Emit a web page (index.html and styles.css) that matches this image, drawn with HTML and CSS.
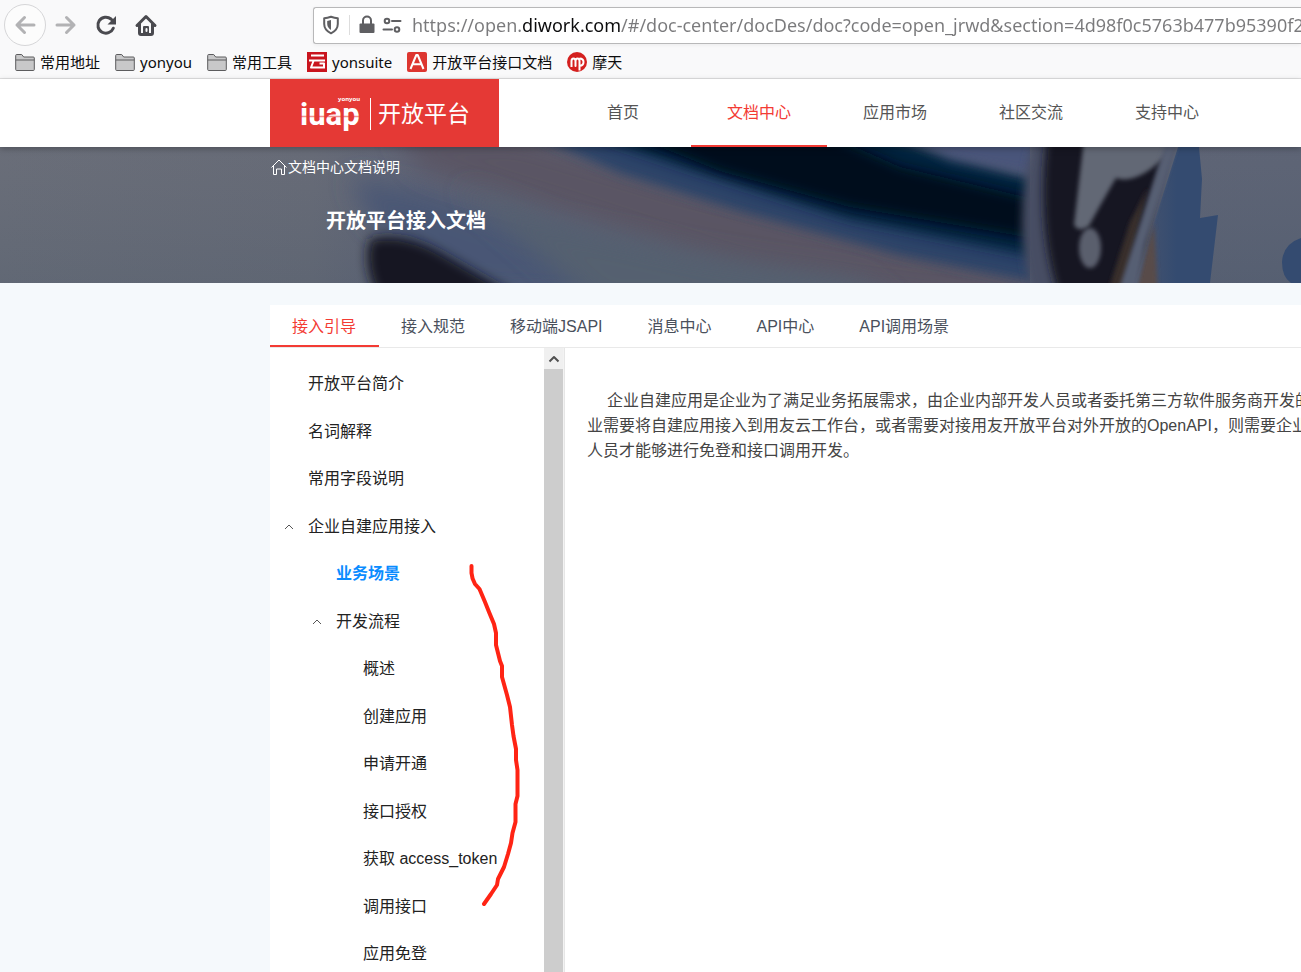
FILE: index.html
```html
<!DOCTYPE html>
<html lang="zh-CN">
<head>
<meta charset="utf-8">
<meta name="viewport" content="width=device-width, initial-scale=1">
<title>开放平台接入文档</title>
<link rel="stylesheet" href="styles.css">
</head>
<body>
<div class="browser">
  <div class="toolbar">
    <div class="tools">
      <button class="tool back" aria-label="后退"><svg width="24" height="24" viewBox="0 0 24 24"><path d="M21 12H4M11.500 4.500L4 12l7.500 7.500"/></svg></button>
      <button class="tool forward" aria-label="前进"><svg width="24" height="24" viewBox="0 0 24 24"><path d="M3 12h17M12.500 4.500L20 12l-7.500 7.500"/></svg></button>
      <button class="tool" aria-label="刷新"><svg width="24" height="24" viewBox="0 0 24 24"><path d="M19.300 15.200A8 8 0 1 1 17 6l2 2"/><path class="solid" d="M22 3v8.500H13.500z"/></svg></button>
      <button class="tool" aria-label="主页"><svg width="24" height="24" viewBox="0 0 24 24"><path d="M3 12.500L12 3.500l9 9M5.500 11v9q0 1.500 1.500 1.500h10q1.500 0 1.500-1.500v-9"/><path class="solid" d="M9 21v-7q0-1 1-1h4q1 0 1 1v7z"/><path class="door" d="M12.500 16v2"/></svg></button>
    </div>
    <div class="address">
      <svg class="shield" width="18" height="20" viewBox="0 0 18 20"><path d="M9 1.700Q5.500 3 2.200 3.200V9q0 6 6.800 9.300Q15.800 15 15.800 9V3.200Q12.500 3 9 1.700z"/><path class="solid" d="M9 5v10Q5.300 12.700 5.200 9V6z"/></svg>
      <svg class="secure" width="44" height="20" viewBox="0 0 44 20"><path class="solid" d="M1.500 8.500h13q1 0 1 1v7.500q0 1-1 1h-13q-1 0-1-1V9.500q0-1 1-1z"/><path d="M4 9V5.500a4 4 0 0 1 8 0V9M33 6h8.500M24.500 14.500H33"/><circle cx="28" cy="6" r="2.300"/><circle cx="38" cy="14.500" r="2.300"/></svg>
      <input class="url" type="text" aria-label="网址" value="https://open.diwork.com/#/doc-center/docDes/doc?code=open_jrwd&amp;section=4d98f0c5763b477b95390f25">
    </div>
  </div>
  <nav class="bookmarks" aria-label="书签">
    <a href="#"><svg width="20" height="20" viewBox="0 0 20 20"><path class="folder" d="M.7 3.500q0-1 1-1h5l2 2.500h9.600q1 0 1 1v11.500q0 1-1 1H1.700q-1 0-1-1zM.7 8h18.600"/></svg>常用地址</a>
    <a href="#"><svg width="20" height="20" viewBox="0 0 20 20"><path class="folder" d="M.7 3.500q0-1 1-1h5l2 2.500h9.600q1 0 1 1v11.500q0 1-1 1H1.700q-1 0-1-1zM.7 8h18.600"/></svg>yonyou</a>
    <a href="#"><svg width="20" height="20" viewBox="0 0 20 20"><path class="folder" d="M.7 3.500q0-1 1-1h5l2 2.500h9.600q1 0 1 1v11.500q0 1-1 1H1.700q-1 0-1-1zM.7 8h18.600"/></svg>常用工具</a>
    <a href="#"><svg width="20" height="20" viewBox="0 0 20 20"><path fill="#c9151e" d="M0 0h20v20H0z"/><path fill="none" stroke="#fff" stroke-width="2" d="M4 3.500h13M2 8.500h16M6.500 9L4 15.500h12.500M12.500 11.500h4.500v5"/></svg>yonsuite</a>
    <a href="#"><svg width="20" height="20" viewBox="0 0 20 20"><rect width="20" height="20" rx="2" fill="#dd3630"/><path fill="none" stroke="#fff" stroke-width="2" d="M3.500 17L9.300 3h1.400l5.800 14M6 12.200h8"/></svg>开放平台接口文档</a>
    <a href="#"><svg width="20" height="20" viewBox="0 0 20 20"><circle cx="10" cy="10" r="10" fill="#d4201f"/><path fill="none" stroke="#fff" stroke-width="2" d="M4.500 15V9q0-2.500 2-2.500t2 2.500v5V9q0-2.500 2-2.500t2 2.500v9.500M12.500 14q4-.5 4-4T12.500 6.500"/></svg>摩天</a>
  </nav>
</div>

<header class="site-header">
  <a class="brand" href="#" aria-label="iuap 开放平台">
    <svg width="62" height="42" viewBox="0 0 62 42"><text class="yonyou" x="38" y="8">yonyou</text><text class="iuap" x="0" y="32">iuap</text><path stroke="#e53935" stroke-opacity=".55" stroke-width="1.500" d="M0 23.500h61"/></svg>
    <span class="brand-name">开放平台</span>
  </a>
  <nav class="main-nav">
    <a href="#">首页</a>
    <a class="active" href="#">文档中心</a>
    <a href="#">应用市场</a>
    <a href="#">社区交流</a>
    <a href="#">支持中心</a>
  </nav>
</header>

<section class="banner">
  <svg class="photo" viewBox="0 0 1301 136" preserveAspectRatio="xMinYMin slice" aria-hidden="true">
    <defs>
      <linearGradient id="base" x1="0" x2="1"><stop offset="0" stop-color="#686c77"/><stop offset=".24" stop-color="#656975"/><stop offset=".33" stop-color="#5b6074"/><stop offset="1" stop-color="#5a6173"/></linearGradient>
      <linearGradient id="floor" x1="0" x2="0" y1="0" y2="1"><stop offset="0" stop-color="#737883" stop-opacity=".15"/><stop offset="1" stop-color="#45586b" stop-opacity=".2"/></linearGradient>
      <linearGradient id="paint" x1="0" x2="1"><stop offset="0" stop-color="#4a556d"/><stop offset=".5" stop-color="#344b70"/></linearGradient>
      <filter id="b12" x="-20%" y="-50%" width="140%" height="200%"><feGaussianBlur stdDeviation="13"/></filter>
      <filter id="b6" x="-20%" y="-30%" width="140%" height="160%"><feGaussianBlur stdDeviation="6"/></filter>
      <filter id="b4" x="-50%" y="-20%" width="200%" height="140%"><feGaussianBlur stdDeviation="4"/></filter>
      <filter id="b2" x="-20%" y="-20%" width="140%" height="140%"><feGaussianBlur stdDeviation="2"/></filter>
      <clipPath id="left"><path d="M0 0h1030v136H0z"/></clipPath>
    </defs>
    <path fill="url(#base)" d="M0 0h1301v136H0z"/>
    <path fill="url(#floor)" d="M0 0h1301v136H0z"/>
    <g clip-path="url(#left)">
      <path fill="#485675" filter="url(#b12)" d="M350 30L430 48 620 112 700 160 450 145 370 70z"/>
      <path fill="#5a5564" filter="url(#b12)" d="M395-15L520-12 680 35 1050 126V170L740 124 560 65 420 22z"/>
      <path fill="#55606f" filter="url(#b12)" d="M460 40L560 78 700 108 860 134 900 165 600 160z"/>
      <path fill="#2a4368" filter="url(#b6)" d="M520-18L680-10 850 50 1050 90V138L900 108 740 64 620 26z"/>
      <path fill="#06213d" filter="url(#b6)" d="M565-20H850L1050 35V112L850 72 690 22z"/>
      <path fill="#020f1f" filter="url(#b6)" d="M610-20H810L900 20 1050 56V94L850 60 720 24z"/>
      <path fill="#48557a" filter="url(#b6)" d="M890-20h160v52L950 12z"/>
      <path fill="#121622" filter="url(#b6)" d="M370 92Q400 84 438 104L518 150H378Q362 118 370 92z"/>
    </g>
    <path fill="#474d64" filter="url(#b4)" d="M1034-10h24v160h-24Q1010 80 1034-10z"/>
    <path fill="#171820" filter="url(#b4)" d="M1047-10h125L1130 150h-71Q1036 80 1047-10z"/>
    <path fill="#382d2c" filter="url(#b2)" d="M1130 75l18-35-24 100-16 4z"/>
    <path fill="#626774" filter="url(#b2)" d="M1084-8h90l-9 18Q1136 38 1116 31 1098 62 1089 79 1079 86 1074 78z"/>
    <ellipse cx="1090" cy="101" rx="11" ry="20" fill="#5a5f6d" filter="url(#b2)"/>
    <path fill="url(#paint)" d="M1178 0h21l3 32-2 39 18-3-8 68h-75z"/>
    <path fill="#594b4a" filter="url(#b2)" d="M1134 150l20-75 4 75z"/>
    <path fill="#575f73" filter="url(#b2)" d="M1167-8h12l-34 105-9 48h-18z"/>
    <path fill="#344b70" d="M1301 91q-18 6-19 24 0 15 9 21h10z"/>
  </svg>
  <nav class="crumbs" aria-label="位置">
    <a href="#"><svg width="18" height="18" viewBox="0 0 18 18"><path d="M1.500 9.500L9 2l7.500 7.500M3.500 8v8.500h3V11h5v5.500h3V8"/></svg>文档中心</a><span>文档说明</span>
  </nav>
  <h1>开放平台接入文档</h1>
</section>

<main class="doc">
  <nav class="tabs">
    <a class="active" href="#">接入引导</a>
    <a href="#">接入规范</a>
    <a href="#">移动端JSAPI</a>
    <a href="#">消息中心</a>
    <a href="#">API中心</a>
    <a href="#">API调用场景</a>
  </nav>
  <div class="columns">
    <aside class="sidebar">
      <ul class="tree">
        <li><a href="#">开放平台简介</a></li>
        <li><a href="#">名词解释</a></li>
        <li><a href="#">常用字段说明</a></li>
        <li><button aria-label="收起"><svg width="10" height="10" viewBox="0 0 10 10"><path d="M1 7l4-4 4 4"/></svg></button><a href="#">企业自建应用接入</a></li>
        <li class="level-2"><a class="current" href="#">业务场景</a></li>
        <li class="level-2"><button aria-label="收起"><svg width="10" height="10" viewBox="0 0 10 10"><path d="M1 7l4-4 4 4"/></svg></button><a href="#">开发流程</a></li>
        <li class="level-3"><a href="#">概述</a></li>
        <li class="level-3"><a href="#">创建应用</a></li>
        <li class="level-3"><a href="#">申请开通</a></li>
        <li class="level-3"><a href="#">接口授权</a></li>
        <li class="level-3"><a href="#">获取 access_token</a></li>
        <li class="level-3"><a href="#">调用接口</a></li>
        <li class="level-3"><a href="#">应用免登</a></li>
      </ul>
      <div class="scrollbar"><button aria-label="向上滚动"><svg width="12" height="12" viewBox="0 0 12 12"><path d="M1.500 8.500L6 4l4.500 4.500"/></svg></button></div>
      <svg class="mark" width="60" height="350" viewBox="0 0 60 350" aria-hidden="true"><path d="M6.500 6V13Q7 19 10 24L14.500 29 20 42 24 52 29 64 31 73V85L35 101 37 106V117L42 135 45 147 47 165 48.500 176 51 189V200L52.500 210V236L50.500 244V262L47.500 273 46 283 43 294 39 307 33 319 32 325 26 334 19 344"/></svg>
    </aside>
    <article class="content">
      <p>企业自建应用是企业为了满足业务拓展需求，由企业内部开发人员或者委托第三方软件服务商开发的<br>业需要将自建应用接入到用友云工作台，或者需要对接用友开放平台对外开放的OpenAPI，则需要企业<br>人员才能够进行免登和接口调用开发。</p>
    </article>
  </div>
</main>
</body>
</html>
```
FILE: styles.css
```css
* { box-sizing: border-box; }
body {
  display: flex;
  flex-direction: column;
  height: 100vh;
  margin: 0;
  overflow: hidden;
  background: #f5f9fc;
  color: #333;
  font: 16px/24px "Liberation Sans", "Noto Sans CJK SC", sans-serif;
}
a { color: inherit; text-decoration: none; }
button { padding: 0; border: 0; background: none; }
svg { display: block; flex: none; }
svg path { stroke-linejoin: round; }

.browser {
  flex: none;
  border-bottom: 1px solid #e0e0e1;
  background: #f9f9fa;
  color: #0c0c0d;
  font-family: "Noto Sans", "Noto Sans CJK SC", sans-serif;
}
.toolbar { display: flex; align-items: center; height: 50px; }
.tools { display: flex; align-items: center; flex: none; width: 313px; padding-left: 4px; }
.tool { display: grid; place-items: center; width: 40px; height: 40px; }
.tool svg { fill: none; stroke: #4a4a4f; stroke-width: 3; stroke-linecap: round; }
.tool .solid { fill: #4a4a4f; stroke: none; }
.tool .door { stroke: #f9f9fa; stroke-width: 2; }
.back { width: 42px; height: 42px; border: 1px solid #d6d6d8; border-radius: 50%; background: #fcfcfc; }
.tool.back svg, .tool.forward svg { stroke: #b2b2b4; }
.address {
  display: flex;
  align-items: center;
  flex: 1;
  min-width: 0;
  height: 37px;
  padding-left: 8px;
  border: 1px solid #b8b8b9;
  border-right: 0;
  border-radius: 3px 0 0 3px;
  background: #fff;
  box-shadow: 0 1px 4px rgba(0, 0, 0, .06);
}
.address svg { fill: none; stroke: #5f5f62; stroke-width: 2; stroke-linecap: round; }
.address .solid { fill: #5f5f62; stroke: none; }
.shield { margin-right: 9px; }
.secure { box-sizing: content-box; padding-left: 9px; border-left: 1px solid #ddd; }
.url {
  flex: 1;
  min-width: 0;
  margin-left: 9px;
  padding: 0;
  border: 0;
  outline: 0;
  background: linear-gradient(90deg, #7a7a7c 109px, #0c0c0d 109px 208px, #7a7a7c 208px);
  background-clip: text;
  -webkit-background-clip: text;
  color: transparent;
  font: 18px/28px "Noto Sans", sans-serif;
}
.bookmarks { display: flex; gap: 15px; height: 28px; padding: 0 15px 4px; font-size: 15px; }
.bookmarks a { display: flex; align-items: center; gap: 5px; white-space: nowrap; }
.folder { fill: #c8c8c9; stroke: #5c5c5e; stroke-width: 1; }

.site-header {
  position: relative;
  z-index: 1;
  display: flex;
  flex: none;
  height: 68px;
  padding-left: 270px;
  background: #fff;
  box-shadow: 0 2px 6px rgba(0, 0, 0, .25);
}
.brand { display: flex; align-items: center; gap: 8px; width: 229px; padding: 2px 0 0 30px; background: #e53935; color: #fff; }
.brand svg { fill: #fff; }
.iuap { font: bold 31px Roboto, sans-serif; }
.yonyou { font: bold 6px "Noto Sans", sans-serif; }
.brand-name { padding-left: 7px; border-left: 1px solid #fff; font-size: 23px; line-height: 32px; white-space: nowrap; }
.main-nav { display: flex; margin-left: 56px; color: #555; }
.main-nav a { width: 136px; padding-top: 22px; border-bottom: 2px solid transparent; text-align: center; }
.main-nav .active { border-color: #f33b34; color: #f33b34; }

.banner { position: relative; flex: none; height: 136px; padding: 8px 0 0 270px; color: #fff; }
.photo { position: absolute; inset: 0; width: 100%; height: 100%; }
.crumbs { position: relative; display: flex; font-size: 14px; }
.crumbs a { display: flex; align-items: center; }
.crumbs svg { fill: none; stroke: #fff; stroke-width: 1; }
.banner h1 { position: relative; margin: 28px 0 0 56px; font-size: 20px; line-height: 28px; }

.doc { display: flex; flex: 1; flex-direction: column; min-height: 0; margin: 22px 0 0 270px; background: #fff; }
.tabs { display: flex; flex: none; height: 43px; border-bottom: 1px solid #e9e9e9; color: #4a505c; }
.tabs a { height: 42px; padding: 10px 23px 0 22px; border-bottom: 2px solid transparent; white-space: nowrap; }
.tabs .active { border-color: #f33b34; color: #f33b34; }
.columns { display: flex; flex: 1; min-height: 0; }
.sidebar { position: relative; display: flex; flex: none; width: 295px; border-right: 1px solid #e6e6e6; }
.tree {
  display: grid;
  grid-auto-rows: 48px 47px;
  flex: 1;
  margin: 0;
  padding: 12px 0 0;
  overflow: hidden;
  color: #222;
  list-style: none;
}
.tree li { display: flex; align-items: center; justify-content: flex-start; padding-left: 38px; }
.tree .level-2 { padding-left: 66px; }
.tree .level-3 { padding-left: 93px; }
.tree button { width: 10px; margin: 0 14px 0 -24px; }
.tree svg { fill: none; stroke: #555; stroke-width: 1; }
.tree .current { color: #0a8cff; font-weight: bold; }
.scrollbar { width: 20px; border-right: 1px solid #f3f3f3; background: #cdcdcd; }
.scrollbar button { display: grid; place-items: center; width: 100%; height: 21px; background: #f0f0f0; }
.scrollbar svg { fill: none; stroke: #505050; stroke-width: 2; }
.mark { position: absolute; top: 212px; left: 195px; fill: none; stroke: #ff2414; stroke-width: 4; stroke-linecap: round; }
.content { flex: 1; min-width: 0; padding: 40px 0 0 22px; overflow: hidden; color: #444; }
.content p { margin: 0; line-height: 25px; text-indent: 20px; white-space: nowrap; }
```
